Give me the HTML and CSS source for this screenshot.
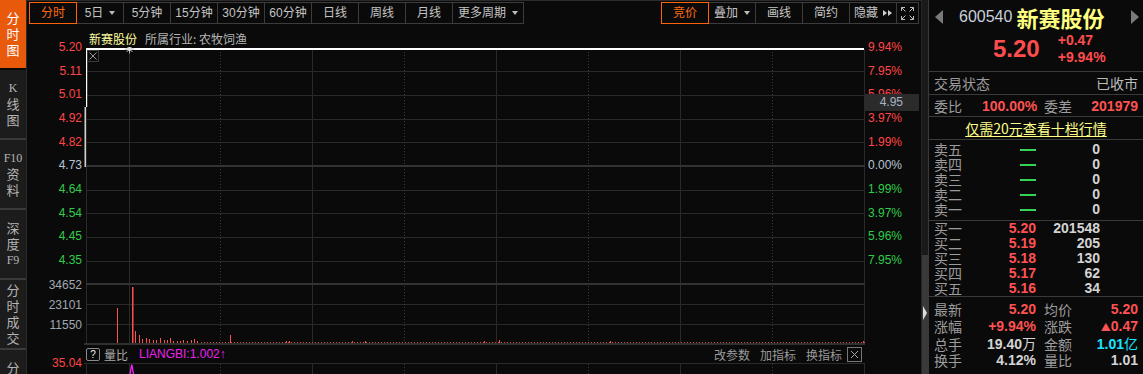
FILE: index.html
```html
<!DOCTYPE html>
<html lang="zh-CN">
<head>
<meta charset="utf-8">
<title>新赛股份 分时图</title>
<link rel="stylesheet" href="styles.css">
</head>
<body>
<div class="app">
  <nav class="side">
    <div class="tab active"><span>分</span><span>时</span><span>图</span></div>
    <div class="tab"><span class="lat">K</span><span>线</span><span>图</span></div>
    <div class="tab"><span class="lat">F10</span><span>资</span><span>料</span></div>
    <div class="tab"><span>深</span><span>度</span><span class="lat">F9</span></div>
    <div class="tab"><span>分</span><span>时</span><span>成</span><span>交</span></div>
    <div class="tab"><span>分</span><span>价</span><span>表</span></div>
  </nav>

  <section class="main">
    <header class="toolbar">
      <div class="group">
        <div class="btn on">分时</div>
        <div class="btn">5日<i class="caret"></i></div>
        <div class="btn">5分钟</div>
        <div class="btn">15分钟</div>
        <div class="btn">30分钟</div>
        <div class="btn">60分钟</div>
        <div class="btn">日线</div>
        <div class="btn">周线</div>
        <div class="btn">月线</div>
        <div class="btn wide">更多周期<i class="caret"></i></div>
      </div>
      <div class="group">
        <div class="btn on">竞价</div>
        <div class="btn">叠加<i class="caret"></i></div>
        <div class="btn">画线</div>
        <div class="btn">简约</div>
        <div class="btn">隐藏<i class="tri first"></i><i class="tri"></i></div>
        <div class="btn icon">
          <svg width="15" height="15" viewBox="0 0 15 15" fill="none" stroke="#bdbdbd" stroke-width="1">
            <path d="M1.5 5V1.5H5M1.5 1.5L5.5 5.5M10 1.5H13.5V5M13.5 1.5L9.5 5.5M1.5 10V13.5H5M1.5 13.5L5.5 9.5M10 13.5H13.5V10M13.5 13.5L9.5 9.5"/>
          </svg>
        </div>
      </div>
    </header>

    <div class="chart">
      <div class="title"><span class="sname-s">新赛股份</span><span class="industry">所属行业: 农牧饲渔</span></div>

      <div class="panel">
        <div class="yaxis">
          <ol class="ticks price">
            <li class="up">5.20</li><li class="up">5.11</li><li class="up">5.01</li><li class="up">4.92</li><li class="up">4.82</li>
            <li class="flat">4.73</li><li class="dn">4.64</li><li class="dn">4.54</li><li class="dn">4.45</li><li class="dn">4.35</li>
          </ol>
          <ol class="ticks vol">
            <li>34652</li><li>23101</li><li>11550</li>
          </ol>
        </div>

        <svg class="plot" width="781" height="296" viewBox="84 47 781 296">
          <defs>
            <pattern id="dots" width="3" height="1" patternUnits="userSpaceOnUse">
              <rect width="1" height="1" fill="#d84a4a"/>
            </pattern>
          </defs>
          <path fill="none" stroke="#2a2a2a" d="M86 71.5H865M86 95.5H865M86 119.5H865M86 142.5H865M86 190.5H865M86 213.5H865M86 237.5H865M86 261.5H865M86 304.5H865M86 324.5H865M86.5 49V343M129.5 49V343M312.5 49V343M496.5 49V343M680.5 49V343M864.5 49V343"/>
          <path fill="none" stroke="#3a3a3a" stroke-dasharray="1 2" d="M220.5 49V343M404.5 49V343M588.5 49V343M772.5 49V343"/>
          <path fill="none" stroke="#333" stroke-width="2" d="M86 166H865M86 284H865"/>
          <path fill="none" stroke="#fff" stroke-width="2" d="M86 49H864"/>
          <path fill="none" stroke="#fff" stroke-width="1.2" d="M86.6 49V107M85.2 107V167"/>
          <rect x="87.5" y="50.5" width="11" height="11" fill="#0a0a0a" stroke="#3c3c3c"/>
          <path fill="none" stroke="#9a9a9a" d="M89.5 52.5L96.5 59.5M96.5 52.5L89.5 59.5"/>
          <path fill="none" stroke="#bbb" d="M125 49H134M129.5 44.5V53.5M126.5 46L132.5 52M132.5 46L126.5 52"/>
          <circle cx="129.5" cy="49" r="2" fill="#e0e0e0"/>
          <rect x="200" y="342" width="665" height="1" fill="url(#dots)"/>
          <g fill="#ff5050">
            <rect x="117" y="308" width="1" height="35"/>
            <rect x="132" y="287" width="1.5" height="56"/>
            <rect x="135" y="331" width="1" height="12"/>
            <rect x="139" y="335" width="1" height="8"/>
            <rect x="142" y="339" width="1" height="4"/>
            <rect x="146" y="338" width="1" height="5"/>
            <rect x="149" y="339" width="1" height="4"/>
            <rect x="153" y="340" width="1" height="3"/>
            <rect x="156" y="340" width="1" height="3"/>
            <rect x="160" y="338" width="1" height="5"/>
            <rect x="164" y="340" width="1" height="3"/>
            <rect x="167" y="340" width="1" height="3"/>
            <rect x="170" y="338" width="1" height="5"/>
            <rect x="173" y="341" width="1" height="2"/>
            <rect x="177" y="341" width="1" height="2"/>
            <rect x="180" y="341" width="1" height="2"/>
            <rect x="183" y="340" width="1" height="3"/>
            <rect x="187" y="341" width="1" height="2"/>
            <rect x="191" y="340" width="1" height="3"/>
            <rect x="194" y="339" width="1" height="4"/>
            <rect x="197" y="341" width="1" height="2"/>
            <rect x="230" y="335" width="1" height="8"/>
            <rect x="286" y="341" width="1" height="2"/>
            <rect x="289" y="341" width="1" height="2"/>
            <rect x="352" y="341" width="1" height="2"/>
            <rect x="365" y="341" width="1" height="2"/>
            <rect x="484" y="341" width="1" height="2"/>
            <rect x="499" y="340" width="1" height="3"/>
            <rect x="610" y="341" width="1" height="2"/>
            <rect x="863" y="341" width="1" height="2"/>
          </g>
        </svg>

        <div class="raxis">
          <ol class="ticks price">
            <li class="up">9.94%</li><li class="up">7.95%</li><li class="up">5.96%</li><li class="up">3.97%</li><li class="up">1.99%</li>
            <li class="flat">0.00%</li><li class="dn">1.99%</li><li class="dn">3.97%</li><li class="dn">5.96%</li><li class="dn">7.95%</li>
          </ol>
          <div class="tag">4.95</div>
        </div>
      </div>

      <div class="ind-bar">
        <div class="ind-axis">35.04</div>
        <div class="ind-head">
          <span class="qbox">?</span>
          <span class="ind-name">量比</span>
          <span class="ind-val">LIANGBI:1.002↑</span>
          <div class="ind-actions">
            <span>改参数</span><span>加指标</span><span>换指标</span>
            <span class="xbox">
              <svg width="13" height="13" viewBox="0 0 13 13"><path d="M3 3L10 10M10 3L3 10" stroke="#aaa" fill="none"/></svg>
            </span>
          </div>
        </div>
        <div class="ind-r"></div>
      </div>

      <div class="ind-panel">
        <div class="ind-l"></div>
        <svg class="plot2" width="781" height="10" viewBox="84 364 781 10">
          <path fill="none" stroke="#2a2a2a" d="M86.5 364V374M129.5 364V374M312.5 364V374M496.5 364V374M680.5 364V374M864.5 364V374"/>
          <path fill="none" stroke="#3a3a3a" stroke-dasharray="1 2" d="M220.5 364V374M404.5 364V374M588.5 364V374M772.5 364V374"/>
          <path fill="none" stroke="#ff22ff" stroke-width="1.3" d="M130 374L131.8 364.5L133.5 374"/>
        </svg>
        <div class="ind-r"></div>
      </div>
    </div>
  </section>

  <div class="strip">
    <div class="track"></div>
    <div class="thumb"><i class="arr"></i></div>
  </div>

  <aside class="quote">
    <div class="q-head">
      <span class="nav prev"></span>
      <span class="code">600540</span>
      <span class="sname">新赛股份</span>
      <span class="nav next"></span>
    </div>
    <div class="q-price">
      <span class="big">5.20</span>
      <div class="chg"><span>+0.47</span><span>+9.94%</span></div>
    </div>
    <div class="row status"><span class="lbl">交易状态</span><span class="lbl right">已收市</span></div>
    <div class="row grid4 ratio">
      <span class="lbl">委比</span><span class="num red">100.00%</span>
      <span class="lbl l2">委差</span><span class="num red">201979</span>
    </div>
    <div class="row promo"><span>仅需20元查看十档行情</span></div>

    <div class="book sell">
      <div class="ob"><span class="lbl">卖五</span><span class="num"><i class="dash"></i></span><span class="num">0</span></div>
      <div class="ob"><span class="lbl">卖四</span><span class="num"><i class="dash"></i></span><span class="num">0</span></div>
      <div class="ob"><span class="lbl">卖三</span><span class="num"><i class="dash"></i></span><span class="num">0</span></div>
      <div class="ob"><span class="lbl">卖二</span><span class="num"><i class="dash"></i></span><span class="num">0</span></div>
      <div class="ob"><span class="lbl">卖一</span><span class="num"><i class="dash"></i></span><span class="num">0</span></div>
    </div>
    <div class="book buy">
      <div class="ob"><span class="lbl">买一</span><span class="num red">5.20</span><span class="num">201548</span></div>
      <div class="ob"><span class="lbl">买二</span><span class="num red">5.19</span><span class="num">205</span></div>
      <div class="ob"><span class="lbl">买三</span><span class="num red">5.18</span><span class="num">130</span></div>
      <div class="ob"><span class="lbl">买四</span><span class="num red">5.17</span><span class="num">62</span></div>
      <div class="ob"><span class="lbl">买五</span><span class="num red">5.16</span><span class="num">34</span></div>
    </div>

    <div class="stats">
      <div class="grid4 st"><span class="lbl">最新</span><span class="num red">5.20</span><span class="lbl l2">均价</span><span class="num red">5.20</span></div>
      <div class="grid4 st"><span class="lbl">涨幅</span><span class="num red">+9.94%</span><span class="lbl l2">涨跌</span><span class="num red"><small>▲</small>0.47</span></div>
      <div class="grid4 st"><span class="lbl">总手</span><span class="num">19.40<em>万</em></span><span class="lbl l2">金额</span><span class="num cyan">1.01<em>亿</em></span></div>
      <div class="grid4 st"><span class="lbl">换手</span><span class="num">4.12%</span><span class="lbl l2">量比</span><span class="num">1.01</span></div>
    </div>
  </aside>
</div>
</body>
</html>
```

FILE: styles.css
```css
* { box-sizing: border-box; margin: 0; padding: 0; }
html, body { background: #0a0a0a; }
body {
  width: 1143px;
  height: 374px;
  overflow: hidden;
  font-family: "Liberation Sans", "Noto Sans CJK SC", sans-serif;
  color: #c0c0c0;
}
i, em, small { font-style: normal; }

.app { display: flex; height: 374px; overflow: hidden; }

/* left vertical tabs */
.side {
  width: 27px;
  flex: none;
  display: flex;
  flex-direction: column;
  background: #1c1c1c;
  border-right: 1px solid #2a2a2a;
  overflow: hidden;
}
.tab {
  height: 70px;
  flex: none;
  border-bottom: 2px solid #3a3a3a;
  display: flex;
  flex-direction: column;
  align-items: center;
  justify-content: center;
  font: 13px/16px "Noto Sans CJK SC", sans-serif;
  color: #b4b4b4;
}
.tab.active { background: #e8590c; color: #fff; border-bottom: 2px solid #0a0a0a; }
.lat { font-family: "Liberation Serif", serif; font-size: 12px; }

/* main column */
.main { width: 894px; flex: none; display: flex; flex-direction: column; }

.toolbar {
  height: 26px;
  border-top: 1px solid #2c2c2c;
  display: flex;
  justify-content: space-between;
  padding: 1px 2px 0 2px;
}
.group { display: flex; height: 22px; }
.btn {
  width: 48px;
  height: 22px;
  flex: none;
  border: 1px solid #3c3c3c;
  display: flex;
  align-items: center;
  justify-content: center;
  font-size: 12px;
  line-height: 20px;
  color: #c4c4c4;
}
.btn + .btn { margin-left: -1px; }
.btn.on { border-color: #ff6208; color: #ff6a10; position: relative; z-index: 1; }
.btn.wide { width: 72px; }
.btn.icon { width: 23px; }
.caret {
  width: 0; height: 0;
  border-top: 4px solid #bbb;
  border-left: 3.5px solid transparent;
  border-right: 3.5px solid transparent;
  margin-left: 6px;
}
.tri {
  width: 0; height: 0;
  border-left: 4px solid #cfcfcf;
  border-top: 3.5px solid transparent;
  border-bottom: 3.5px solid transparent;
  margin-left: 1px;
}
.tri.first { margin-left: 5px; }

/* chart */
.chart { display: flex; flex-direction: column; flex: 1; }
.title {
  height: 21px;
  padding: 4px 0 0 62px;
  display: flex;
  gap: 8px;
  font-size: 12px;
  line-height: 17px;
  font-family: "Noto Sans CJK SC", sans-serif;
}
.sname-s { color: #ffffa0; }
.industry { color: #b4b4b4; }

.panel { display: flex; height: 296px; }
.yaxis { width: 57px; flex: none; text-align: right; padding-right: 2px; font-size: 12px; }
.ticks { list-style: none; }
.ticks li { height: 23.65px; line-height: 23.65px; white-space: nowrap; }
.ticks.price { margin-top: -10.8px; }
.ticks.vol { margin-top: 2.3px; }
.ticks.vol li { height: 20px; line-height: 20px; color: #a0a8b0; }
.up { color: #ff4646; }
.flat { color: #b8c4d4; }
.dn { color: #2fcc4a; }
.plot { display: block; flex: none; width: 781px; height: 296px; }
.raxis { width: 56px; flex: none; position: relative; padding-left: 3px; font-size: 12px; }
.tag {
  position: absolute;
  left: 0;
  top: 47px;
  width: 54px;
  height: 17px;
  background: #2b2b2b;
  color: #a8b4c0;
  text-align: right;
  padding-right: 16px;
  font-size: 12px;
  line-height: 17px;
}

.ind-bar { display: flex; height: 21px; }
.ind-axis {
  width: 57px;
  flex: none;
  text-align: right;
  padding: 13px 2px 0 0;
  font-size: 12px;
  line-height: 14px;
  color: #ff4646;
}
.ind-head {
  width: 781px;
  flex: none;
  border-top: 2px solid #303030;
  border-bottom: 1px solid #2a2a2a;
  display: flex;
  align-items: center;
  padding: 0 3px 0 2px;
  font-size: 12px;
}
.qbox {
  width: 14px;
  height: 13px;
  border: 1px solid #8a8a8a;
  border-radius: 2px;
  color: #eee;
  font-size: 10px;
  line-height: 11px;
  text-align: center;
}
.ind-name { margin-left: 4px; color: #a8a8a8; font-family: "Noto Sans CJK SC", sans-serif; }
.ind-val { margin-left: 11px; color: #ee22ee; }
.ind-actions {
  margin-left: auto;
  display: flex;
  align-items: center;
  gap: 10px;
  color: #9a9a9a;
  font-family: "Noto Sans CJK SC", sans-serif;
}
.xbox {
  width: 15px;
  height: 15px;
  margin-left: -5px;
  border: 1px solid #777;
  display: flex;
  align-items: center;
  justify-content: center;
}
.ind-r { width: 56px; flex: none; }
.ind-panel { display: flex; height: 10px; }
.ind-l { width: 57px; flex: none; }
.plot2 { display: block; flex: none; }

/* scroll strip */
.strip {
  width: 7px;
  flex: none;
  display: flex;
  flex-direction: column;
  border-left: 1px solid #262626;
  background: #1a1a1a;
}
.track { height: 255px; flex: none; }
.thumb { flex: 1; background: #3a3a3a; }
.arr {
  display: block;
  width: 0; height: 0;
  border-left: 4px solid #ddd;
  border-top: 7px solid transparent;
  border-bottom: 7px solid transparent;
  margin: 51px 0 0 1px;
}

/* quote panel */
.quote {
  width: 215px;
  flex: none;
  border-left: 1px solid #3a3a3a;
  display: flex;
  flex-direction: column;
  font-size: 14px;
}
.q-head {
  height: 32px;
  flex: none;
  display: flex;
  align-items: center;
  padding: 2px 4px 0 6px;
}
.nav {
  flex: none;
  width: 8px;
  height: 14px;
  background: #7a7a7a;
}
.nav.prev { clip-path: polygon(100% 0, 100% 100%, 0 50%); }
.nav.next { margin-left: auto; clip-path: polygon(0 0, 0 100%, 100% 50%); }
.code { margin-left: 16px; font-size: 16px; color: #c8d0dc; }
.sname { margin-left: 4px; font: bold 22px/26px "Noto Sans CJK SC", sans-serif; color: #ffff80; }

.q-price {
  height: 40px;
  flex: none;
  display: flex;
  padding-left: 64px;
  border-bottom: 1px solid #3a3a3a;
  color: #ff4d4d;
}
.big { font: bold 24px/33px "Liberation Sans", sans-serif; }
.chg { margin-left: 18px; display: flex; flex-direction: column; font: bold 14px/17px "Liberation Sans", sans-serif; }

.row {
  height: 23px;
  flex: none;
  display: flex;
  align-items: center;
  padding: 0 5px;
  border-bottom: 1px solid #3a3a3a;
}
.row.ratio { height: 22px; }
.lbl { font-family: "Noto Sans CJK SC", sans-serif; color: #9c9c9c; }
.lbl.right { margin-left: auto; color: #bcbcbc; }
.num { font-weight: bold; text-align: right; color: #d4d4d4; white-space: nowrap; }
.num em, .num small { font-family: "Noto Sans CJK SC", sans-serif; font-weight: normal; }
.num small { font-size: 10px; }
.red { color: #ff5252; }
.cyan { color: #19e6ff; }
.grid4 { display: grid; grid-template-columns: 48px 54px 54px 48px; align-items: center; }
.row.grid4 { display: grid; }
.l2 { padding-left: 8px; }
.promo { justify-content: center; color: #ffff88; }
.promo span { text-decoration: underline; text-underline-offset: 2px; font-family: "Noto Sans CJK SC", sans-serif; }

.book { flex: none; border-bottom: 1px solid #3a3a3a; padding-left: 5px; }
.book.sell { padding-top: 2px; padding-bottom: 3px; }
.ob {
  display: grid;
  grid-template-columns: 48px 54px 64px;
  height: 15px;
  line-height: 15px;
}
.dash { display: inline-block; width: 16px; height: 2px; background: #35d457; vertical-align: middle; }

.stats { padding: 4px 5px 0; }
.st { height: 17px; line-height: 17px; }
```
